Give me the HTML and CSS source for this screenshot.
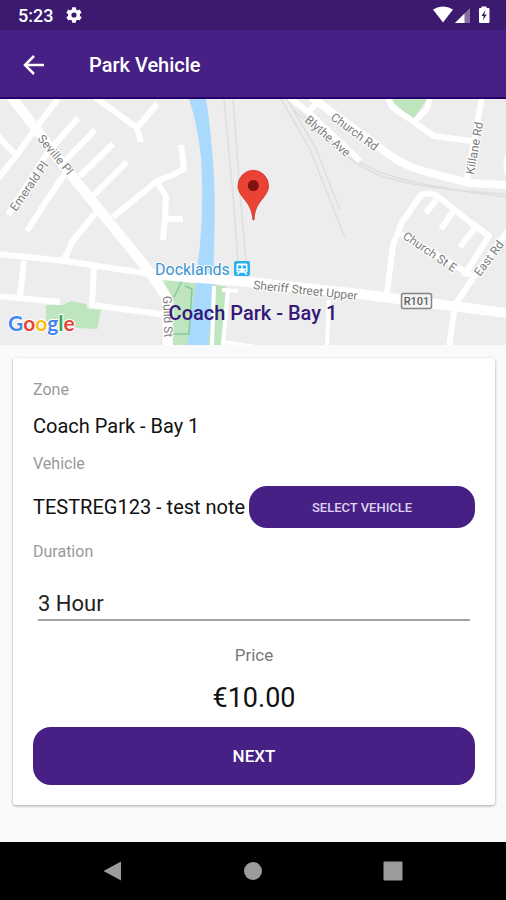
FILE: index.html
```html
<!DOCTYPE html>
<html lang="en">
<head>
<meta charset="utf-8">
<meta name="viewport" content="width=device-width, initial-scale=1">
<title>Park Vehicle</title>
<link rel="stylesheet" href="styles.css">
</head>
<body>
<div class="screen">
  <div class="status">
    <span class="clock">5:23</span>
    <svg class="gear" width="16" height="16" viewBox="0 0 16 16" aria-hidden="true">
      <g fill="#fff"><circle cx="8" cy="8" r="6"/>
      <rect x="6" y="0.300" width="4" height="15.400" rx="0.600"/><rect x="6" y="0.300" width="4" height="15.400" rx="0.600" transform="rotate(60 8 8)"/><rect x="6" y="0.300" width="4" height="15.400" rx="0.600" transform="rotate(120 8 8)"/></g>
      <circle cx="8" cy="8" r="2.600" fill="#3c1a70"/>
    </svg>
    <svg class="signals" width="58" height="18" viewBox="432 6 58 18" aria-hidden="true">
      <path d="M433 9.500Q443 3.500 453 9.500L443 22.500Z" fill="#fff"/>
      <path d="M470 8V23H455Z" fill="#84709f"/>
      <path d="M464.500 13.500V23H455Z" fill="#fff"/>
      <path d="M481.500 6.500h5V8h2q1 0 1 1v13q0 1-1 1h-8.500q-1 0-1-1V9q0-1 1-1h1.500Z" fill="#fff"/>
      <path d="M485.500 10l-4 6h2.300l-1 4.500 4-6h-2.500Z" fill="#3c1a70"/>
    </svg>
  </div>
  <header class="appbar">
    <button class="back" type="button" aria-label="Back">
      <svg width="22" height="20" viewBox="0 0 22 20"><path d="M11 1L2 10l9 9M2 10h19" fill="none" stroke="#fff" stroke-width="2.500"/></svg>
    </button>
    <h1>Park Vehicle</h1>
  </header>
  <main>
    <svg class="map" viewBox="0 99 506 246" preserveAspectRatio="xMidYMid slice" role="img" aria-label="Map of Coach Park - Bay 1">
      <rect y="99" width="506" height="246" fill="#ededed"/>
      <g fill="#bfe5bf">
        <path d="M46 305L63 305 71 301 86 304 88 309 101 310 97 329 78 328 46 322Z"/>
        <path d="M390 99H427L413 120Z"/>
        <path d="M163 279L200 284 190 345H172L174 302ZM212 284L227 287 221 345H207Z"/>
      </g>
      <path d="M189 99H206Q210 123 212 150Q216 190 214 245L213 300L208 345H187L195 288L200 245Q204 200 201 158Q198 126 189 99Z" fill="#a9d9fd"/>
      <path class="rail" d="M224 99L233 195 238 262M233 99L241 205 246 262M281 99L310 149 345 238M287 99L316 149 340 210M292 108Q338 156 372 172T506 194M300 112Q345 160 382 173T506 197"/>
      <path d="M183 279L174 297M185 286L192 289 189 334M173 334H190" fill="none" stroke="#86c99a" stroke-width="1.500"/>
      <g class="roads">
        <path class="w10" d="M9 94L37 130 68 171 110 223 148 270 167 298 168 350"/>
        <path class="w6" d="M58 99L38 125 16 156 -4 181M-2 136L14 153M78 118L48 152 8 215M95 130L66 160M113 144L80 176M127 162L94 195M66 172L45 203 27 231M97 211L72 242 65 258M95 97L137 128 157 104M137 128L141 142M113 217L157 181 172 175 184 169 181 145M157 182L166 196 165 218 163 240M165 219H183"/>
        <path class="w6" d="M-2 254L65 261 150 274M24 261L20 297M-2 296L60 302M94 266L92 305 167 315"/>
        <path class="w10" d="M149 274L250 282 360 294 506 313"/>
        <path class="w4" d="M228 288L223 345M222 290L238 291M223 342L255 347M329 300L327 345M214 286L212 345"/>
        <path class="w6" d="M289 97L308 112 317 103M308 112L360 161M388 97L392 107 414 122 434 136 471 141M414 122L427 109 430 97M482 97L467 180M508 156Q505 165 508 174"/>
        <path class="w8" d="M311 97L380 148Q400 164 420 170T470 183L508 185"/>
        <path class="w6" d="M386 301L393 245 402 222 421 195Q430 191 440 198L470 222 489 236 464 276M436 200L426 213M454 210L441 229M474 229L460 247M508 231L475 275 455 305 449 348M398 232L471 275"/>
      </g>
      <g class="street">
        <text transform="translate(37 139) rotate(50)">Seville Pl</text>
        <text transform="translate(16 212) rotate(-55)">Emerald Pl</text>
        <text transform="translate(330 119) rotate(36)">Church Rd</text>
        <text transform="translate(304 121) rotate(41)">Blythe Ave</text>
        <text transform="translate(474 175) rotate(-80)">Killane Rd</text>
        <text transform="translate(402 238) rotate(34)">Church St E</text>
        <text transform="translate(480 277) rotate(-53)">East Rd</text>
        <text transform="translate(253 289) rotate(6)">Sheriff Street Upper</text>
        <text transform="translate(163 296) rotate(88)">Guild St</text>
      </g>
      <rect x="401.500" y="293.500" width="30" height="15" rx="2" fill="#f4f4f4" stroke="#858585" stroke-width="1.500"/>
      <text x="416.500" y="305" class="route">R101</text>
      <text x="155" y="275" class="station">Docklands</text>
      <rect x="234" y="261" width="16" height="15" rx="2" fill="#27b1f3"/>
      <path d="M238 263.500h8q1.500 0 1.500 1.500v6.500q0 1-1.500 1l1.500 2h-2l-1.300-1.700h-4.400L238.500 274.500h-2l1.500-2q-1.500 0-1.500-1V265q0-1.500 1.500-1.500Z" fill="#fff"/>
      <path d="M238 265.500h3.300v3H238ZM242.700 265.500h3.300v3h-3.300ZM238 270h1.500v1.300H238ZM244.500 270h1.500v1.300h-1.500Z" fill="#27b1f3"/>
      <path d="M253 220C252 210 249 205 245 200C240.500 194.500 238 191 238 186a15 15.500 0 0 1 30.500 0C268.500 191 266 194.500 261.500 200C257.500 205 254.500 210 254 220Z" fill="#ea4335" stroke="#d23228" stroke-width="0.800"/>
      <circle cx="253.300" cy="185.500" r="5.500" fill="#7d1210"/>
      <text x="8" y="331" class="google"><tspan class="blue">G</tspan><tspan class="red">o</tspan><tspan class="yellow">o</tspan><tspan class="blue">g</tspan><tspan class="green">l</tspan><tspan class="red">e</tspan></text>
      <text x="253" y="320" class="place">Coach Park - Bay 1</text>
    </svg>
    <form class="card">
      <div class="label">Zone</div>
      <div class="value">Coach Park - Bay 1</div>
      <div class="label">Vehicle</div>
      <div class="vehicle">
        <span class="value">TESTREG123 - test note</span>
        <button class="button select" type="button">SELECT VEHICLE</button>
      </div>
      <label class="label" for="duration">Duration</label>
      <input class="duration" id="duration" type="text" value="3 Hour">
      <div class="price-label">Price</div>
      <div class="price">€10.00</div>
      <button class="button next" type="button">NEXT</button>
    </form>
  </main>
  <nav class="navbar" aria-label="System">
    <button type="button" aria-label="Back"><svg width="22" height="22" viewBox="0 0 22 22"><path d="M19 1.500v19L1.500 11Z"/></svg></button>
    <button type="button" aria-label="Home"><svg width="22" height="22" viewBox="0 0 22 22"><circle cx="11" cy="11" r="9"/></svg></button>
    <button type="button" aria-label="Recent apps"><svg width="22" height="22" viewBox="0 0 22 22"><rect x="1.500" y="1.500" width="19" height="19" rx="1"/></svg></button>
  </nav>
</div>
</body>
</html>
```
FILE: styles.css
```css
* { box-sizing: border-box; }

body {
  margin: 0;
  background: #fafafa;
  color: #111;
  font-family: Roboto, "Liberation Sans", sans-serif;
}

button {
  padding: 0;
  border: 0;
  background: none;
  font-family: inherit;
  cursor: pointer;
}

svg { display: block; }

.screen {
  display: flex;
  flex-direction: column;
  min-height: 100vh;
}

main { flex: 1; }

.status {
  display: flex;
  align-items: center;
  height: 30px;
  padding: 0 16px 0 18px;
  background: #3c1a70;
  color: #fff;
}

.clock {
  font-size: 18px;
  font-weight: 500;
}

.gear { margin-left: 13px; }
.signals { margin-left: auto; }

.appbar {
  display: flex;
  align-items: center;
  gap: 44px;
  height: 69px;
  padding: 2px 23px 0;
  border-bottom: 2px solid #24006e;
  background: #462085;
  color: #fff;
}

.appbar h1 {
  margin: 0;
  font-size: 20px;
  font-weight: 500;
}

.map {
  width: 100%;
  height: 246px;
}

.rail {
  fill: none;
  stroke: #dcdfe0;
  stroke-width: 1.5px;
}

.roads {
  fill: none;
  stroke: #fff;
  stroke-linejoin: round;
}

.w4 { stroke-width: 4px; }
.w6 { stroke-width: 6px; }
.w8 { stroke-width: 8px; }
.w10 { stroke-width: 10px; }

.map text {
  paint-order: stroke;
  stroke: #fff;
  stroke-width: 2px;
}

.street {
  font-size: 12px;
  fill: #7c7c7c;
}

.map .route {
  font-size: 11px;
  font-weight: 500;
  fill: #606060;
  stroke: none;
  text-anchor: middle;
}

.station {
  font-size: 16px;
  fill: #3793d1;
}

.google {
  font-family: Lato, "Liberation Sans", sans-serif;
  font-size: 21px;
  font-weight: 700;
}

.blue { fill: #4285f4; }
.red { fill: #ea4335; }
.yellow { fill: #fbbc05; }
.green { fill: #34a853; }

.map .place {
  font-size: 20px;
  font-weight: 500;
  fill: #36177a;
  stroke: none;
  text-anchor: middle;
}

.card {
  display: flex;
  flex-direction: column;
  gap: 12px;
  margin: 13px 11px 36px 13px;
  padding: 20px;
  border-radius: 3px;
  background: #fff;
  box-shadow: 0 1px 3px rgba(0, 0, 0, 0.35);
}

.label {
  padding-top: 2px;
  color: #999;
  font-size: 16px;
  line-height: 20px;
}

.value {
  font-size: 20px;
  line-height: 28px;
}

.vehicle {
  display: flex;
  align-items: center;
  gap: 4px;
}

.button {
  background: #462085;
  color: #fff;
  font-weight: 500;
}

.select {
  flex: 1;
  height: 42px;
  border-radius: 18px;
  color: #ded4f0;
  font-size: 13px;
}

.duration {
  height: 47px;
  margin: 0 5px;
  padding: 14px 0 0;
  border: 0;
  border-bottom: 2px solid #a3a3a3;
  border-radius: 0;
  background: none;
  color: #222;
  font: 22px Roboto, "Liberation Sans", sans-serif;
}

.price-label {
  margin-top: 10px;
  padding-top: 2px;
  color: #777;
  font-size: 17px;
  line-height: 20px;
  text-align: center;
}

.price {
  padding-top: 4px;
  font-size: 27px;
  line-height: 34px;
  text-align: center;
}

.next {
  height: 58px;
  border-radius: 18px;
  font-size: 17px;
}

.navbar {
  display: flex;
  justify-content: center;
  gap: 118px;
  height: 58px;
  background: #000;
}

.navbar svg { fill: #9b9b9b; }
```
